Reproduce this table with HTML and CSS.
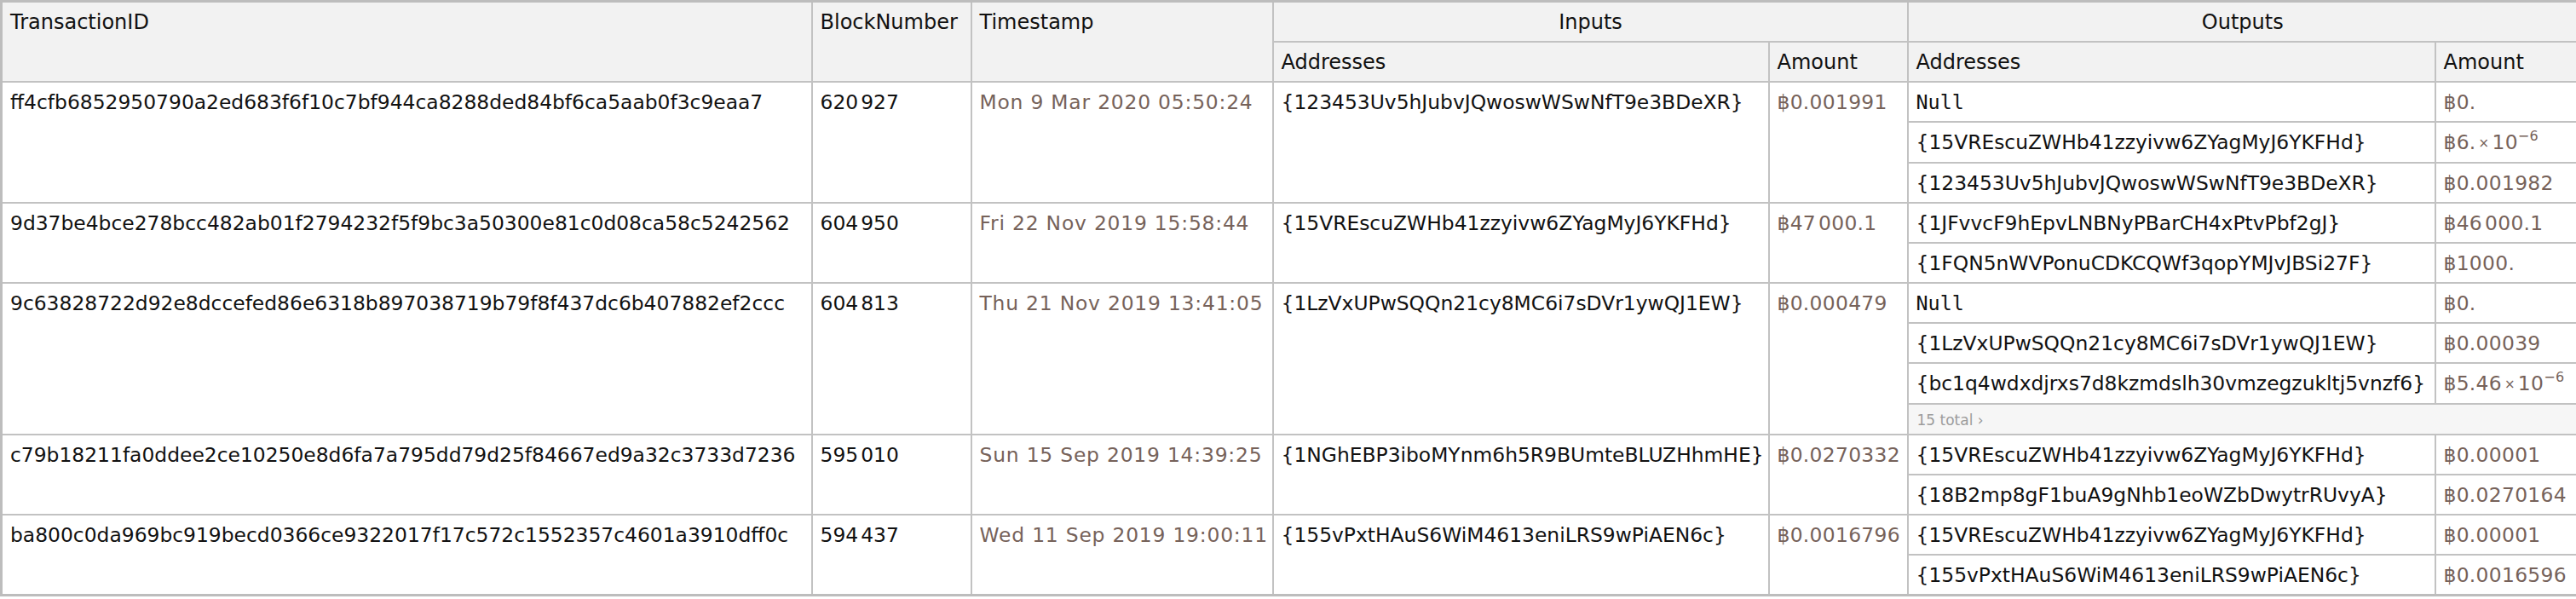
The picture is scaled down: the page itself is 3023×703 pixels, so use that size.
FILE: index.html
```html
<!DOCTYPE html>
<html lang="en">
<head>
<meta charset="utf-8">
<title>Transactions</title>
<link rel="stylesheet" href="styles.css">
</head>
<body>
<table class="ds">
  <colgroup>
    <col class="c-id">
    <col class="c-block">
    <col class="c-time">
    <col class="c-inaddr">
    <col class="c-inamt">
    <col class="c-outaddr">
    <col class="c-outamt">
  </colgroup>
  <thead>
    <tr>
      <th rowspan="2">TransactionID</th>
      <th rowspan="2">BlockNumber</th>
      <th rowspan="2">Timestamp</th>
      <th colspan="2" class="grp">Inputs</th>
      <th colspan="2" class="grp">Outputs</th>
    </tr>
    <tr>
      <th>Addresses</th>
      <th>Amount</th>
      <th>Addresses</th>
      <th>Amount</th>
    </tr>
  </thead>
  <tbody>
    <tr>
      <td rowspan="3">ff4cfb6852950790a2ed683f6f10c7bf944ca8288ded84bf6ca5aab0f3c9eaa7</td>
      <td rowspan="3">620<span class="gs"></span>927</td>
      <td rowspan="3" class="q ts">Mon 9 Mar 2020 05:50:24</td>
      <td rowspan="3">{123453Uv5hJubvJQwoswWSwNfT9e3BDeXR}</td>
      <td rowspan="3" class="q">฿0.001991</td>
      <td class="mono">Null</td>
      <td class="q">฿0.</td>
    </tr>
    <tr>
      <td>{15VREscuZWHb41zzyivw6ZYagMyJ6YKFHd}</td>
      <td class="q">฿6.<span class="x">×</span>10<sup>−6</sup></td>
    </tr>
    <tr>
      <td>{123453Uv5hJubvJQwoswWSwNfT9e3BDeXR}</td>
      <td class="q">฿0.001982</td>
    </tr>

    <tr>
      <td rowspan="2">9d37be4bce278bcc482ab01f2794232f5f9bc3a50300e81c0d08ca58c5242562</td>
      <td rowspan="2">604<span class="gs"></span>950</td>
      <td rowspan="2" class="q ts">Fri 22 Nov 2019 15:58:44</td>
      <td rowspan="2">{15VREscuZWHb41zzyivw6ZYagMyJ6YKFHd}</td>
      <td rowspan="2" class="q">฿47<span class="gs"></span>000.1</td>
      <td>{1JFvvcF9hEpvLNBNyPBarCH4xPtvPbf2gJ}</td>
      <td class="q">฿46<span class="gs"></span>000.1</td>
    </tr>
    <tr>
      <td>{1FQN5nWVPonuCDKCQWf3qopYMJvJBSi27F}</td>
      <td class="q">฿1000.</td>
    </tr>

    <tr>
      <td rowspan="4">9c63828722d92e8dccefed86e6318b897038719b79f8f437dc6b407882ef2ccc</td>
      <td rowspan="4">604<span class="gs"></span>813</td>
      <td rowspan="4" class="q ts">Thu 21 Nov 2019 13:41:05</td>
      <td rowspan="4">{1LzVxUPwSQQn21cy8MC6i7sDVr1ywQJ1EW}</td>
      <td rowspan="4" class="q">฿0.000479</td>
      <td class="mono">Null</td>
      <td class="q">฿0.</td>
    </tr>
    <tr>
      <td>{1LzVxUPwSQQn21cy8MC6i7sDVr1ywQJ1EW}</td>
      <td class="q">฿0.00039</td>
    </tr>
    <tr>
      <td>{bc1q4wdxdjrxs7d8kzmdslh30vmzegzukltj5vnzf6}</td>
      <td class="q">฿5.46<span class="x">×</span>10<sup>−6</sup></td>
    </tr>
    <tr class="more">
      <td colspan="2">15 total ›</td>
    </tr>

    <tr>
      <td rowspan="2">c79b18211fa0ddee2ce10250e8d6fa7a795dd79d25f84667ed9a32c3733d7236</td>
      <td rowspan="2">595<span class="gs"></span>010</td>
      <td rowspan="2" class="q ts">Sun 15 Sep 2019 14:39:25</td>
      <td rowspan="2">{1NGhEBP3iboMYnm6h5R9BUmteBLUZHhmHE}</td>
      <td rowspan="2" class="q">฿0.0270332</td>
      <td>{15VREscuZWHb41zzyivw6ZYagMyJ6YKFHd}</td>
      <td class="q">฿0.00001</td>
    </tr>
    <tr>
      <td>{18B2mp8gF1buA9gNhb1eoWZbDwytrRUvyA}</td>
      <td class="q">฿0.0270164</td>
    </tr>

    <tr>
      <td rowspan="2">ba800c0da969bc919becd0366ce9322017f17c572c1552357c4601a3910dff0c</td>
      <td rowspan="2">594<span class="gs"></span>437</td>
      <td rowspan="2" class="q ts">Wed 11 Sep 2019 19:00:11</td>
      <td rowspan="2">{155vPxtHAuS6WiM4613eniLRS9wPiAEN6c}</td>
      <td rowspan="2" class="q">฿0.0016796</td>
      <td>{15VREscuZWHb41zzyivw6ZYagMyJ6YKFHd}</td>
      <td class="q">฿0.00001</td>
    </tr>
    <tr>
      <td>{155vPxtHAuS6WiM4613eniLRS9wPiAEN6c}</td>
      <td class="q">฿0.0016596</td>
    </tr>
  </tbody>
</table>
</body>
</html>
```

FILE: styles.css
```css
html, body {
  margin: 0;
  padding: 0;
  background: #ffffff;
}

body {
  font-family: "DejaVu Sans", Verdana, "Noto Sans", sans-serif;
  font-size: 23.4px;
  color: #111111;
}

.ds {
  border-collapse: collapse;
  table-layout: fixed;
  width: 3023px;
  border: 3px solid #bdbdbd;
}

.c-id { width: 951px; }
.c-block { width: 187px; }
.c-time { width: 354px; }
.c-inaddr { width: 582px; }
.c-inamt { width: 163px; }
.c-outaddr { width: 619px; }
.c-outamt { width: 167px; }

.ds th,
.ds td {
  border: 2px solid #c2c2c2;
  padding: 9px 8px 8px 9px;
  line-height: 28px;
  text-align: left;
  vertical-align: top;
  white-space: nowrap;
  overflow: hidden;
  font-weight: normal;
}

.ds th {
  background: #f2f2f2;
  color: #111111;
  font-size: 24px;
}

.ds th.grp {
  text-align: center;
}

.q {
  color: #76625a;
  letter-spacing: 0.3px;
}

.ts {
  letter-spacing: 0.8px;
}

.mono {
  font-family: "DejaVu Sans Mono", "Liberation Mono", monospace;
}

.gs {
  display: inline-block;
  width: 3px;
}

.x {
  font-size: 15px;
  margin: 0 3px;
  vertical-align: 2px;
}

sup {
  font-size: 16px;
  line-height: 0;
  vertical-align: 10px;
}

.ds .more td {
  background: #f6f6f6;
  color: #9c9c9c;
  font-size: 17px;
  line-height: 20px;
  padding: 8px 10px 6px 10px;
}
```
